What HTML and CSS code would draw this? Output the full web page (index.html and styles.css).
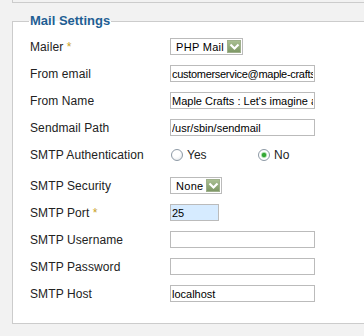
FILE: index.html
```html
<!DOCTYPE html>
<html lang="en">
<head>
    <meta charset="UTF-8">
    <meta name="viewport" content="width=device-width, initial-scale=1.0">
    <title>Mail Settings</title>
    <link rel="stylesheet" href="styles.css">
</head>
<body>
    <div class="top-panel"></div>

    <fieldset class="settings">
        <legend>Mail Settings</legend>

        <div class="row">
            <label class="label" for="mailer">Mailer <span class="req">*</span></label>
            <span class="select select-mailer">
                <select id="mailer">
                    <option>PHP Mail</option>
                    <option>Sendmail</option>
                    <option>SMTP</option>
                </select>
                <span class="select-arrow">
                    <svg width="11" height="9" viewBox="0 0 11 9"><path d="M1.5 2.5 L5.5 6.5 L9.5 2.5" fill="none" stroke="#fff" stroke-width="2.2"/></svg>
                </span>
            </span>
        </div>

        <div class="row">
            <label class="label" for="mailfrom">From email</label>
            <input type="text" id="mailfrom" class="field field-email" value="customerservice@maple-crafts.com">
        </div>

        <div class="row">
            <label class="label" for="fromname">From Name</label>
            <input type="text" id="fromname" class="field" value="Maple Crafts : Let's imagine and create">
        </div>

        <div class="row">
            <label class="label" for="sendmail">Sendmail Path</label>
            <input type="text" id="sendmail" class="field" value="/usr/sbin/sendmail">
        </div>

        <div class="row">
            <span class="label">SMTP Authentication</span>
            <div class="radio-group">
                <label class="radio-option"><input type="radio" name="smtpauth"> Yes</label>
                <label class="radio-option"><input type="radio" name="smtpauth" checked> No</label>
            </div>
        </div>

        <div class="row row-spaced">
            <label class="label" for="smtpsecure">SMTP Security</label>
            <span class="select select-secure">
                <select id="smtpsecure">
                    <option>None</option>
                    <option>SSL</option>
                    <option>TLS</option>
                </select>
                <span class="select-arrow">
                    <svg width="11" height="9" viewBox="0 0 11 9"><path d="M1.5 2.5 L5.5 6.5 L9.5 2.5" fill="none" stroke="#fff" stroke-width="2.2"/></svg>
                </span>
            </span>
        </div>

        <div class="row">
            <label class="label" for="smtpport">SMTP Port <span class="req">*</span></label>
            <input type="text" id="smtpport" class="field field-short" value="25">
        </div>

        <div class="row">
            <label class="label" for="smtpuser">SMTP Username</label>
            <input type="text" id="smtpuser" class="field" value="">
        </div>

        <div class="row">
            <label class="label" for="smtppass">SMTP Password</label>
            <input type="password" id="smtppass" class="field" value="">
        </div>

        <div class="row">
            <label class="label" for="smtphost">SMTP Host</label>
            <input type="text" id="smtphost" class="field" value="localhost">
        </div>
    </fieldset>
</body>
</html>
```

FILE: styles.css
```css
* {
    box-sizing: border-box;
}

body {
    margin: 0;
    background: #f2f2f2;
    font-family: "Liberation Sans", Arial, sans-serif;
    font-size: 12px;
    color: #222;
}

.top-panel {
    height: 3px;
    margin-left: 12px;
    border-left: 1px solid #ccc;
    border-bottom: 1px solid #ccc;
}

/* panel continues past the right edge, so no right border */
.settings {
    margin: 10px 0 0 12px;
    min-width: 0;
    background: #fff;
    border: 1px solid #ccc;
    border-right: 0;
    padding: 4px 0 16px 17px;
}

.settings legend {
    font-size: 13px;
    font-weight: bold;
    line-height: 16px;
    color: #1f5f94;
    padding: 0 1px;
    margin-left: -1px;
}

.row {
    display: flex;
    align-items: center;
    height: 27px;
}

.row-spaced {
    margin-top: 4px;
}

.label {
    width: 140px;
    flex-shrink: 0;
    letter-spacing: 0.1px;
}

.req {
    color: #c9a227;
}

.field {
    width: 145px;
    height: 17px;
    margin: 0;
    padding: 0 1px;
    border: 1px solid #bbb;
    background: #fff;
    font-family: "Liberation Sans", Arial, sans-serif;
    font-size: 11px;
    color: #000;
    outline: none;
}

.field-email {
    letter-spacing: -0.3px;
}

.field-short {
    width: 49px;
    background: #d6ebff;
}

/* select with the green arrow button */
.select {
    position: relative;
    display: inline-block;
    height: 17px;
}

.select select {
    appearance: none;
    -webkit-appearance: none;
    height: 17px;
    margin: 0;
    padding: 0 14px 0 5px;
    border: 1px solid #bbb;
    border-radius: 0;
    background: #fff;
    font-family: "Liberation Sans", Arial, sans-serif;
    font-size: 11px;
    letter-spacing: 0.3px;
    color: #000;
    outline: none;
}

.select-mailer select {
    width: 73px;
}

.select-secure select {
    width: 52px;
}

.select-arrow {
    position: absolute;
    top: 2px;
    right: 2px;
    width: 14px;
    height: 13px;
    display: flex;
    align-items: center;
    justify-content: center;
    background: linear-gradient(#a9bf92, #7e9866);
    border: 1px solid #9fb08c;
    pointer-events: none;
}

.radio-group {
    display: flex;
    align-items: center;
}

.radio-option {
    display: flex;
    align-items: center;
    gap: 4px;
    width: 87px;
    padding-left: 1px;
}

.radio-option input {
    appearance: none;
    -webkit-appearance: none;
    width: 12px;
    height: 12px;
    margin: 0;
    border: 1px solid #8d99a5;
    border-radius: 50%;
    background: radial-gradient(circle at 40% 35%, #fff 0, #fff 40%, #dde2e6 100%);
}

.radio-option input:checked {
    background: radial-gradient(circle, #35a835 0, #35a835 1.8px, #b6e2b6 2.6px, #fff 3.6px, #fff 100%);
}
```
